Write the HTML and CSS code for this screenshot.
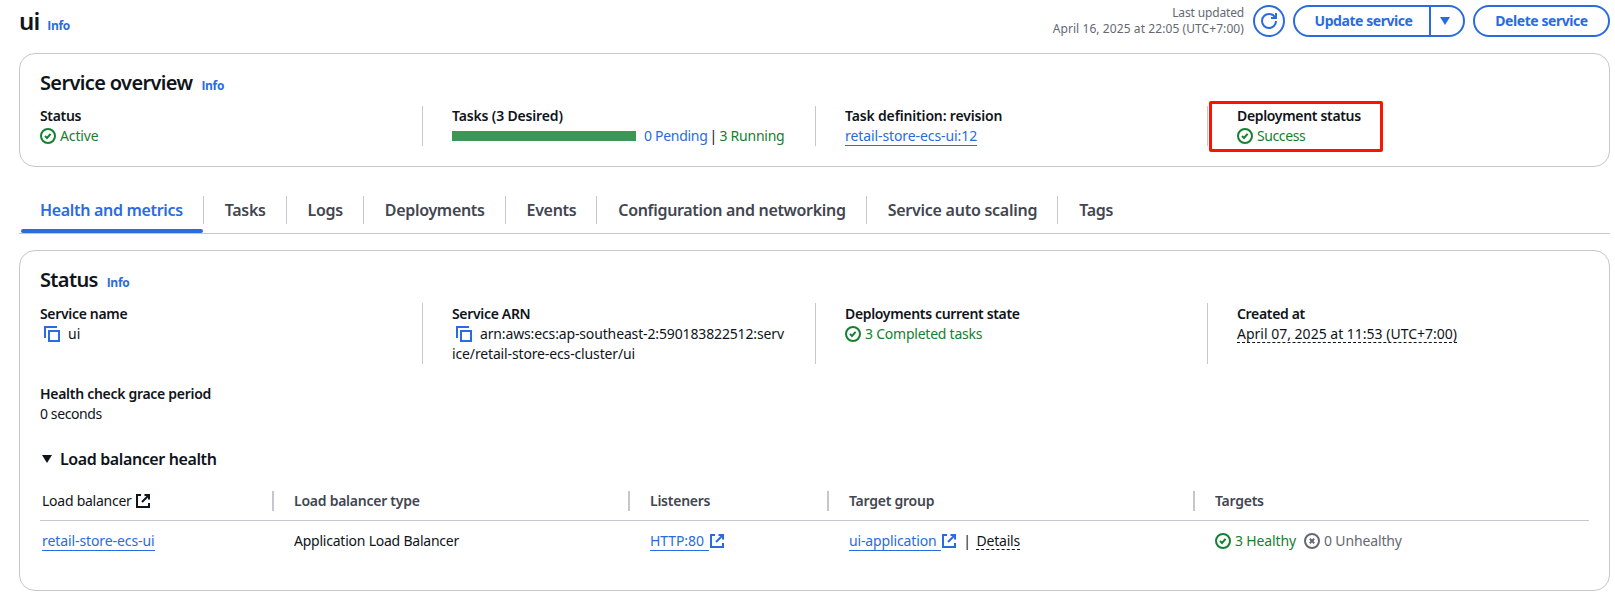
FILE: index.html
```html
<!DOCTYPE html>
<html lang="en">
<head>
<meta charset="utf-8">
<title>ui - Service</title>
<link rel="stylesheet" href="styles.css">
</head>
<body>
<svg class="defs" aria-hidden="true">
  <symbol id="ok" viewBox="0 0 16 16"><circle cx="8" cy="8" r="7"/><path d="M5 8l2 2 3.6-4.2"/></symbol>
  <symbol id="bad" viewBox="0 0 16 16"><circle cx="8" cy="8" r="7"/><path d="M5.8 5.8l4.4 4.4M10.2 5.8l-4.4 4.4"/></symbol>
  <symbol id="copy" viewBox="0 0 16 16"><path d="M1 12V1h12"/><path d="M5 5h10v10H5z"/></symbol>
  <symbol id="ext" viewBox="0 0 16 16"><path d="M9.5 2H14v4.5M7 9l7-7"/><path d="M6 2H2v12h12v-4"/></symbol>
  <symbol id="refresh" viewBox="0 0 16 16"><path d="M10 5h5V0"/><path d="M15 8a6.957 6.957 0 0 1-7 7 6.957 6.957 0 0 1-7-7 6.957 6.957 0 0 1 7-7 6.87 6.87 0 0 1 6.3 4"/></symbol>
</svg>
<div class="page">
  <header class="header">
    <div class="heading"><h1>ui</h1><a class="info">Info</a></div>
    <div class="actions">
      <div class="updated"><span class="last">Last updated</span><span class="time">April 16, 2025 at 22:05 (UTC+7:00)</span></div>
      <button class="btn refresh"><svg class="icon"><use href="#refresh"/></svg></button>
      <div class="split"><button class="btn main">Update service</button><button class="btn more"><svg class="caret" viewBox="0 0 10 8"><path d="M0 0h10L5 8z"/></svg></button></div>
      <button class="btn delete">Delete service</button>
    </div>
  </header>

  <section class="panel overview">
    <div class="title"><h2>Service overview</h2><a class="info">Info</a></div>
    <div class="columns">
      <div class="col"><div class="label tight">Status</div><div class="value ok"><svg class="icon"><use href="#ok"/></svg><span class="n1">Active</span></div></div>
      <div class="col"><div class="label">Tasks (3 Desired)</div><div class="value"><span class="bar"></span><span class="pending">0 Pending</span><span class="pipe">|</span><span class="running">3 Running</span></div></div>
      <div class="col"><div class="label">Task definition: revision</div><div class="value"><a class="link">retail-store-ecs-ui:12</a></div></div>
      <div class="col"><div class="label tight">Deployment status</div><div class="value ok"><svg class="icon"><use href="#ok"/></svg><span class="n4">Success</span></div><div class="highlight"></div></div>
    </div>
  </section>

  <nav class="tabs">
    <a class="tab active">Health and metrics</a>
    <a class="tab">Tasks</a>
    <a class="tab">Logs</a>
    <a class="tab">Deployments</a>
    <a class="tab">Events</a>
    <a class="tab">Configuration and networking</a>
    <a class="tab auto">Service auto scaling</a>
    <a class="tab">Tags</a>
  </nav>

  <section class="panel status">
    <div class="title"><h2>Status</h2><a class="info">Info</a></div>
    <div class="columns">
      <div class="col"><div class="label tight">Service name</div><div class="value"><svg class="icon copy"><use href="#copy"/></svg>ui</div></div>
      <div class="col"><div class="label tight">Service ARN</div><div class="value arn"><svg class="icon copy"><use href="#copy"/></svg>arn:aws:ecs:ap-southeast-2:590183822512:serv<br>ice/retail-store-ecs-cluster/ui</div></div>
      <div class="col"><div class="label tight">Deployments current state</div><div class="value ok"><svg class="icon"><use href="#ok"/></svg><span class="n2">3 Completed tasks</span></div></div>
      <div class="col"><div class="label tight">Created at</div><div class="value"><span class="dashed date">April 07, 2025 at 11:53 (UTC+7:00)</span></div></div>
    </div>
    <div class="grace"><div class="label grace-label">Health check grace period</div><div class="value n4">0 seconds</div></div>
    <div class="expander"><svg class="caret" viewBox="0 0 10 8"><path d="M0 0h10L5 8z"/></svg><h3>Load balancer health</h3></div>
    <div class="table">
      <div class="row head">
        <div class="cell first">Load balancer<svg class="icon ext"><use href="#ext"/></svg></div>
        <div class="cell">Load balancer type</div>
        <div class="cell">Listeners</div>
        <div class="cell">Target group</div>
        <div class="cell">Targets</div>
      </div>
      <div class="row">
        <div class="cell first"><a class="link">retail-store-ecs-ui</a></div>
        <div class="cell n2">Application Load Balancer</div>
        <div class="cell"><a class="link spaced">HTTP:80</a><svg class="icon ext blue"><use href="#ext"/></svg></div>
        <div class="cell"><a class="link spaced n1">ui-application</a><svg class="icon ext blue"><use href="#ext"/></svg><span class="bar-sep">|</span><span class="dashed details">Details</span></div>
        <div class="cell"><span class="value ok"><svg class="icon"><use href="#ok"/></svg><span class="n1">3 Healthy</span></span><span class="value gray"><svg class="icon"><use href="#bad"/></svg><span class="n1">0 Unhealthy</span></span></div>
      </div>
    </div>
  </section>
</div>
</body>
</html>
```
FILE: styles.css
```css
* { box-sizing: border-box; }
body { margin: 0; background: #fff; color: #0f141a; font: 14px/20px "Noto Sans", "Open Sans", sans-serif; }
h1, h2, h3 { margin: 0; font-weight: 650; }
.defs { display: block; width: 0; height: 0; position: absolute; }
.page { width: 1615px; height: 600px; padding: 0 5px 0 19px; overflow: hidden; }
.icon { width: 16px; height: 16px; flex: none; fill: none; stroke: currentColor; stroke-width: 2; }
.caret { width: 10px; height: 8px; fill: currentColor; flex: none; }
.info { font: 700 12px/16px "Open Sans", sans-serif; letter-spacing: -.35px; color: #2b6be0; }

.header { display: flex; justify-content: space-between; height: 53px; padding-top: 5px; }
.heading { display: flex; align-items: baseline; gap: 8px; padding-top: 1px; height: 32px; }
.heading h1 { font-size: 24px; line-height: 30px; letter-spacing: -.9px; }
.actions { display: flex; height: 32px; }
.updated { display: flex; flex-direction: column; align-items: flex-end; font-size: 12px; line-height: 16px; color: #656871; margin-right: 9px; white-space: nowrap; }
.last { letter-spacing: -.15px; }
.time { letter-spacing: .08px; }
.btn { height: 32px; margin: 0; padding: 0; border: 2px solid #2b6be0; background: #fff; color: #2b6be0; border-radius: 20px; font: 700 14px/20px "Noto Sans", sans-serif; letter-spacing: -.44px; display: flex; align-items: center; justify-content: center; }
.refresh { width: 32px; margin-right: 8px; }
.split { display: flex; margin-right: 8px; }
.main { width: 137px; padding-left: 3px; border-radius: 20px 0 0 20px; border-right-width: 1px; }
.more { width: 35px; padding-right: 4px; border-radius: 0 20px 20px 0; border-left-width: 1px; }
.delete { width: 137px; }

.panel { border: 1px solid #c6c6cd; border-radius: 16px; padding: 17px 20px 0; }
.overview { height: 114px; }
.title { display: flex; align-items: baseline; gap: 9px; height: 24px; }
.title h2 { font-size: 20px; line-height: 24px; letter-spacing: -.64px; }
.columns { display: grid; grid-template-columns: 383px 393px 392px 1fr; margin-top: 11px; }
.col { position: relative; padding-left: 29px; }
.col:first-child { padding-left: 0; }
.col:not(:last-child) { border-right: 1px solid #c6c6cd; }
.label { font-weight: 600; letter-spacing: -.16px; white-space: nowrap; }
.tight { letter-spacing: -.33px; }
.grace-label { letter-spacing: -.29px; }
.value { white-space: nowrap; }
.ok, .gray { display: flex; align-items: center; gap: 4px; }
.ok { color: #148030; }
.gray { color: #656871; }
.bar { display: inline-block; width: 184px; height: 10px; background: #3c9656; margin-right: 8px; }
.pending { color: #2b6be0; letter-spacing: -.3px; }
.pipe { display: inline-block; width: 12px; text-align: center; }
.running { color: #148030; letter-spacing: -.24px; }
.link { display: inline-block; height: 20px; color: #2b6be0; border-bottom: 1px solid #2b6be0; letter-spacing: -.09px; vertical-align: top; }
.highlight { position: absolute; left: 1px; top: -5px; width: 174px; height: 51px; border: 3px solid #ff1200; border-radius: 2px; }
.n1 { letter-spacing: -.14px; }
.n2 { letter-spacing: -.23px; }
.n4 { letter-spacing: -.4px; }

.tabs { display: flex; height: 67px; margin-bottom: 16px; padding-top: 29px; border-bottom: 1px solid #c6c6cd; }
.tab { position: relative; height: 28px; padding: 4px 20px 4px 21px; border-right: 1px solid #c6c6cd; color: #424650; font-size: 16px; line-height: 20px; font-weight: 600; letter-spacing: -.32px; white-space: nowrap; }
.tab.auto { letter-spacing: -.25px; }
.tab:last-child { border-right: 0; }
.tab.active { color: #2b6be0; }
.tab.active::after { content: ""; position: absolute; left: 2px; right: 0; top: 33px; height: 4px; border-radius: 2px; background: #2b6be0; }

.status { height: 341px; }
.status .columns { height: 60px; }
.status .col { padding-top: 1px; }
.icon.copy { display: inline-block; margin: 0 8px 0 4px; color: #2b6be0; vertical-align: -3px; }
.arn { letter-spacing: -.14px; height: 40px; }
.dashed { display: inline-block; height: 19px; border-bottom: 1px dashed #0f141a; vertical-align: top; }
.grace { margin-top: 21px; }
.expander { display: flex; align-items: center; height: 24px; margin-top: 23px; padding-left: 2px; gap: 8px; }
.expander h3 { font-size: 16px; line-height: 20px; font-weight: 600; letter-spacing: -.39px; }
.row { display: grid; grid-template-columns: 234px 356px 199px 366px 1fr; }
.cell { display: flex; align-items: center; height: 20px; padding-left: 20px; white-space: nowrap; }
.cell.first { padding-left: 2px; }
.head { margin-top: 20px; padding-bottom: 9px; border-bottom: 1px solid #c6c6cd; margin-bottom: 10px; color: #424650; font-weight: 600; letter-spacing: -.25px; }
.head .cell:not(:last-child) { border-right: 2px solid #c6c6cd; }
.head .first { color: #0f141a; font-weight: 400; }
.icon.ext { margin-left: 3px; }
.icon.ext.blue { color: #2b6be0; margin-left: 0; }
.spaced { padding-right: 5px; }
.bar-sep { width: 19px; text-align: center; }
.details { height: 19px; letter-spacing: -.2px; line-height: 19px; align-self: flex-start; }
.gray { margin-left: 8px; }
```
